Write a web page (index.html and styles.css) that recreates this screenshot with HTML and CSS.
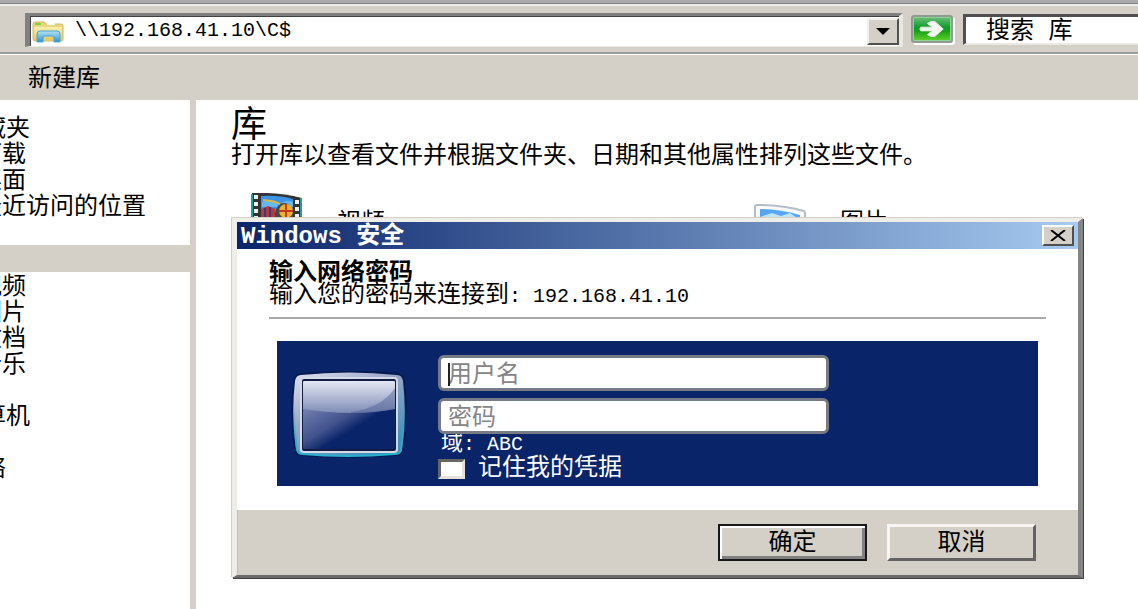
FILE: index.html
```html
<!DOCTYPE html>
<html lang="zh-CN">
<head>
<meta charset="utf-8">
<title>库</title>
<link rel="stylesheet" href="styles.css">
</head>
<body>
<div class="explorer">
  <header class="navbar">
    <div class="address">
      <svg class="folder-icon" viewBox="0 0 32 22" preserveAspectRatio="none" aria-hidden="true">
        <defs>
          <linearGradient id="fold" x1="0" y1="0" x2="0" y2="1"><stop offset="0" stop-color="#f8efb0"/><stop offset="1" stop-color="#e3c964"/></linearGradient>
          <linearGradient id="stand" x1="0" y1="0" x2="0" y2="1"><stop offset="0" stop-color="#b5e2f5"/><stop offset="1" stop-color="#2c93d0"/></linearGradient>
        </defs>
        <path d="M1 3q0-2 2-2h9l2 2h15q2 0 2 2v14q0 1-2 1H3q-2 0-2-2z" fill="#e9d681" stroke="#cdb963"/>
        <path d="M3 2h6v2H3z" fill="#7fd03a"/><path d="M15 2h8v2h-8z" fill="#fff"/>
        <path d="M2 6h28v13H2z" fill="url(#fold)"/>
        <path d="M5 21v-8q0-3 3-3h17q3 0 3 3v8h-6v-4q0-2-2-2h-7q-2 0-2 2v4z" fill="url(#stand)" stroke="#4aa5d5"/>
      </svg>
      <input class="address-input" type="text" aria-label="地址" value="\\192.168.41.10\C$">
      <button class="drop" type="button" aria-label="展开"><svg width="14" height="7" viewBox="0 0 14 7"><path d="M0 0h14L7 7z"/></svg></button>
    </div>
    <button class="go" type="button" aria-label="转到">
      <svg viewBox="0 0 32 20" width="30" height="20"><path d="M4 8h12l-5-4 4-2h4l9 8-9 8h-4l-4-2 5-4H4q-2-2 0-4z" fill="#f4f6f2" stroke="#dfe8dc" stroke-linejoin="round"/></svg>
    </button>
    <input class="search" type="text" aria-label="搜索" value="搜索 库">
  </header>
  <div class="toolbar"><button class="tool" type="button">新建库</button></div>
  <div class="columns">
    <nav class="sidebar">
      <ul class="tree favorites">
        <li class="root">收藏夹</li><li>下载</li><li>桌面</li><li>最近访问的位置</li>
      </ul>
      <ul class="tree libraries">
        <li>视频</li><li>图片</li><li>文档</li><li>音乐</li>
        <li class="root spaced">计算机</li><li class="root spaced">网络</li>
      </ul>
    </nav>
    <main class="main">
      <h1 class="heading">库</h1>
      <p class="hint">打开库以查看文件并根据文件夹、日期和其他属性排列这些文件。</p>
      <div class="items">
        <div class="item">
          <svg class="item-icon" viewBox="0 0 52 40" aria-hidden="true">
            <path d="M1 0q26-1 50 5v35H1z" fill="#333"/>
            <path d="M0 1h2v39H0zM49 5h2v35h-2z" fill="#239c9c"/>
            <path d="M10 3q18-1 32 3v34H10z" fill="#3c94e8"/>
            <path d="M11 9q14-4 16 3 8-6 15-3v5H11z" fill="#67b8ed"/>
            <path d="M10 16l7-3 7 3v24H10z" fill="#bc392f"/><path d="M14 15v25M19 14v26" stroke="#293f96" stroke-width="2"/>
            <path d="M24 20q3-13 13-9l5 4v25H24z" fill="#49464a"/>
            <circle cx="35" cy="18" r="7" fill="#e7b42b"/><path d="M35 11v14M28 18h14" stroke="#c83620" stroke-width="2"/>
            <path d="M12 7q12 1 17 4" stroke="#ddb849" stroke-width="2" fill="none"/>
            <path d="M5 2v38M46 7v33" stroke="#eef2ef" stroke-width="4" stroke-dasharray="4 3"/>
          </svg>
          <span>视频</span>
        </div>
        <div class="item">
          <svg class="item-icon photo" viewBox="0 0 52 30" aria-hidden="true">
            <path d="M1 3q0-2 2-2 25 0 47 6 1 1 1 3v20H1z" fill="#fafafa" stroke="#b5bdc7" stroke-width="2"/>
            <path d="M6 5q20 0 40 6v19H6z" fill="#58a6f5"/><path d="M6 13l12-4 9 3 9-3 10 7v14H6z" fill="#bfe4fb"/>
          </svg>
          <span>图片</span>
        </div>
      </div>
      <section class="dialog" role="dialog" aria-labelledby="dialog-title">
        <header class="titlebar">
          <h2 id="dialog-title" class="title">Windows 安全</h2>
          <button class="close" type="button" aria-label="关闭"><svg width="16" height="11" viewBox="0 0 16 11"><path d="M1 0l14 11M15 0L1 11" stroke="#000" stroke-width="2"/></svg></button>
        </header>
        <form class="form">
          <div class="body">
            <h3 class="prompt">输入网络密码</h3>
            <p class="target">输入您的密码来连接到<span class="mono">: 192.168.41.10</span></p>
            <div class="panel">
              <svg class="tile" viewBox="0 0 116 88" aria-hidden="true">
                <defs>
                  <linearGradient id="frame" x1="0" y1="0" x2=".7" y2="1"><stop offset="0" stop-color="#dfe1ef"/><stop offset=".45" stop-color="#9ba7c7"/><stop offset="1" stop-color="#3f8fbd"/></linearGradient>
                  <linearGradient id="rim" x1="0" y1="0" x2="0" y2="1"><stop offset="0" stop-color="#28b1cf" stop-opacity="0"/><stop offset="1" stop-color="#28b1cf"/></linearGradient>
                  <linearGradient id="gloss" x1="0" y1="0" x2="0" y2="1"><stop offset="0" stop-color="#e4e7f3"/><stop offset="1" stop-color="#7e8bb5"/></linearGradient>
                  <linearGradient id="glass" x1="0" y1=".4" x2=".5" y2="1"><stop offset="0" stop-color="#7381b0"/><stop offset=".5" stop-color="#42528c"/><stop offset=".75" stop-color="#0a246a"/></linearGradient>
                </defs>
                <path d="M10 4q48-5 96 0 5 0 6 6 4 34-1 69-1 4-6 4-47 4-94 0-5 0-6-5Q0 44 4 10q1-6 6-6z" fill="#071a50" stroke="#071b52" stroke-width="4"/>
                <path d="M10 4q48-5 96 0 5 0 6 6 4 34-1 69-1 4-6 4-47 4-94 0-5 0-6-5Q0 44 4 10q1-6 6-6z" fill="url(#frame)"/>
                <path d="M3 30q0 29 3 48 1 5 5 5 46 4 93 0 5 0 6-4 4-25 3-49" fill="none" stroke="url(#rim)" stroke-width="2"/>
                <rect x="10" y="7" width="96" height="74" rx="3" fill="#101c43" stroke="#d5dae9" stroke-width="2"/>
                <rect x="12" y="10" width="92" height="68" rx="1" fill="url(#glass)"/>
                <path d="M12 11q0-1 2-1h88q2 0 2 1v27q-42 8-92 0z" fill="url(#gloss)"/>
                <path d="M60 41q30-4 44-24v21q-20 4-44 4z" fill="#41528d" opacity=".4"/>
              </svg>
              <div class="fields">
                <div class="field"><input class="textbox" type="text" placeholder="用户名" aria-label="用户名"><span class="caret"></span></div>
                <div class="field"><input class="textbox" type="password" placeholder="密码" aria-label="密码"></div>
                <p class="domain">域<span class="mono">: ABC</span></p>
                <label class="remember"><input class="check" type="checkbox">记住我的凭据</label>
              </div>
            </div>
          </div>
          <footer class="actions">
            <button class="btn primary" type="button">确定</button>
            <button class="btn" type="button">取消</button>
          </footer>
        </form>
      </section>
    </main>
  </div>
</div>
</body>
</html>
```
FILE: styles.css
```css
* { box-sizing: border-box; }
body {
  margin: 0;
  background: #d4d0c8;
  color: #000;
  font: 24px/26px "Liberation Mono", "Noto Sans CJK SC", monospace;
  overflow: hidden;
}
h1, h2, h3, p, ul { margin: 0; padding: 0; }
ul { list-style: none; }
button, input { font: inherit; color: inherit; margin: 0; padding: 0; border-radius: 0; }
svg { display: block; }
.mono { font-size: 20px; }

.explorer { display: flex; flex-direction: column; min-height: 100vh; }
.navbar {
  display: flex;
  align-items: flex-start;
  height: 55px;
  padding: 8px 0 0 25px;
  border-top: 3px solid #a9a9a9;
  border-bottom: 1px solid #fff;
  box-shadow: inset 0 1px #858585, inset 0 3px #ebebeb, inset 0 -2px #9a9a9a;
}
.address {
  flex: 1;
  display: flex;
  align-items: center;
  height: 34px;
  margin-top: 2px;
  padding-left: 2px;
  background: #fff;
  border: solid #808080;
  border-width: 3px 0 0 5px;
  border-right: 4px solid #e9e7e2;
  border-bottom: 1px solid #e9e7e2;
  box-shadow: inset 1px 1px #404040;
}
.folder-icon { width: 32px; height: 22px; margin-top: 2px; }
.address-input {
  flex: 1;
  min-width: 0;
  height: 26px;
  margin-left: 11px;
  border: 0;
  outline: 0;
  background: transparent;
  font-size: 20px;
}
.drop {
  display: grid;
  place-items: center;
  width: 32px;
  height: 27px;
  background: #d4d0c8;
  border: 2px solid;
  border-color: #f2f0ec #505050 #505050 #f2f0ec;
}
.go {
  display: grid;
  place-items: center;
  width: 42px;
  height: 28px;
  margin: 4px 10px 0 8px;
  border: 2px solid #8d9b90;
  border-radius: 3px;
  background: linear-gradient(#6fbd78, #0b9d29 45%, #19a217 60%, #61d32d);
  box-shadow: 2px 2px #fff, inset 0 0 0 1px #8ed392;
}
.search {
  width: 175px;
  height: 31px;
  margin-top: 3px;
  padding: 0 0 6px 20px;
  background: #fff;
  border: solid #505050;
  border-width: 3px 0 0 3px;
  border-bottom: 2px solid #ebe9e4;
}
.toolbar { height: 45px; padding: 12px 28px 0; }
.tool { border: 0; background: transparent; }

.columns { flex: 1; display: flex; }
.sidebar {
  display: flex;
  flex-direction: column;
  gap: 27px;
  width: 190px;
  overflow: hidden;
  white-space: nowrap;
}
.tree { background: #fff; }
.tree li { margin-left: -22px; }
.tree .root { margin-left: -42px; }
.tree .spaced { margin-top: 26px; }
.favorites { padding: 17px 0 24px; }
.libraries { flex: 1; padding-top: 3px; }
.main {
  position: relative;
  flex: 1;
  min-width: 0;
  margin-left: 6px;
  padding: 11px 0 0 35px;
  background: #fff;
}
.heading { font-size: 36px; line-height: 34px; font-weight: 400; }
.hint { margin-top: -1px; white-space: nowrap; }
.items { display: grid; grid-template-columns: 503px 1fr; padding: 23px 0 0 20px; }
.item { display: flex; align-items: flex-start; gap: 34px; }
.item span { padding-top: 18px; }
.item-icon { width: 52px; height: 40px; }
.photo { height: 30px; margin-top: 11px; }

.dialog {
  position: absolute;
  top: 118px;
  left: 36px;
  right: 55px;
  background: #d4d0c8;
  border: solid;
  border-width: 4px 5px 3px;
  border-color: #efede8 #858585 #6a6a6a #efede8;
  box-shadow: inset 1px 1px #c2beb5, -1px -1px #d4d0c8, inset -1px 0 #d4d0c8, 1px 1px #404040;
}
.titlebar {
  display: flex;
  align-items: center;
  justify-content: space-between;
  height: 27px;
  padding: 0 4px 0 4px;
  background: linear-gradient(90deg, #0a246a, #a6caf0);
  color: #fff;
}
.title { padding-top: 2px; font-size: 24px; line-height: 26px; }
.close {
  display: grid;
  place-items: center;
  width: 32px;
  height: 21px;
  background: #d4d0c8;
  border: 2px solid;
  border-color: #fff #505050 #505050 #fff;
}
.body { padding: 14px 32px 24px; background: #fff; }
.prompt { font-size: 24px; line-height: 22px; }
.target { padding-bottom: 9px; line-height: 22px; border-bottom: 2px solid #aaa; }
.panel {
  display: flex;
  gap: 31px;
  margin: 22px 8px 0;
  padding: 14px 16px 6px 14px;
  background: #0a246a;
  color: #fff;
}
.tile { width: 116px; height: 88px; margin-top: 16px; }
.fields { flex: 0 1 391px; display: flex; flex-direction: column; }
.field { position: relative; margin-bottom: 7px; }
.textbox {
  display: block;
  width: 100%;
  height: 36px;
  padding: 4px 7px 0;
  background: #fff;
  border: 3px solid #777b84;
  border-radius: 6px;
  color: #000;
}
.textbox::placeholder { color: #858585; opacity: 1; }
.caret { position: absolute; left: 10px; top: 8px; width: 2px; height: 23px; background: #222; }
.domain { margin: -8px 0 0 3px; font-size: 22px; line-height: 24px; }
.remember { display: flex; align-items: center; gap: 13px; line-height: 23px; }
.check {
  appearance: none;
  width: 27px;
  height: 20px;
  background: #fff;
  border: 3px solid;
  border-color: #666 #e5e1d8 #e5e1d8 #666;
}
.actions { display: flex; justify-content: flex-end; gap: 20px; padding: 14px 42px 14px; }
.btn {
  width: 149px;
  height: 37px;
  padding-top: 2px;
  background: #d4d0c8;
  border: 3px solid;
  border-color: #f7f6f3 #626262 #626262 #f7f6f3;
}
.primary {
  border: 2px solid #181818;
  box-shadow: inset 2px 2px #fff, inset -3px -3px #808080;
}
```
